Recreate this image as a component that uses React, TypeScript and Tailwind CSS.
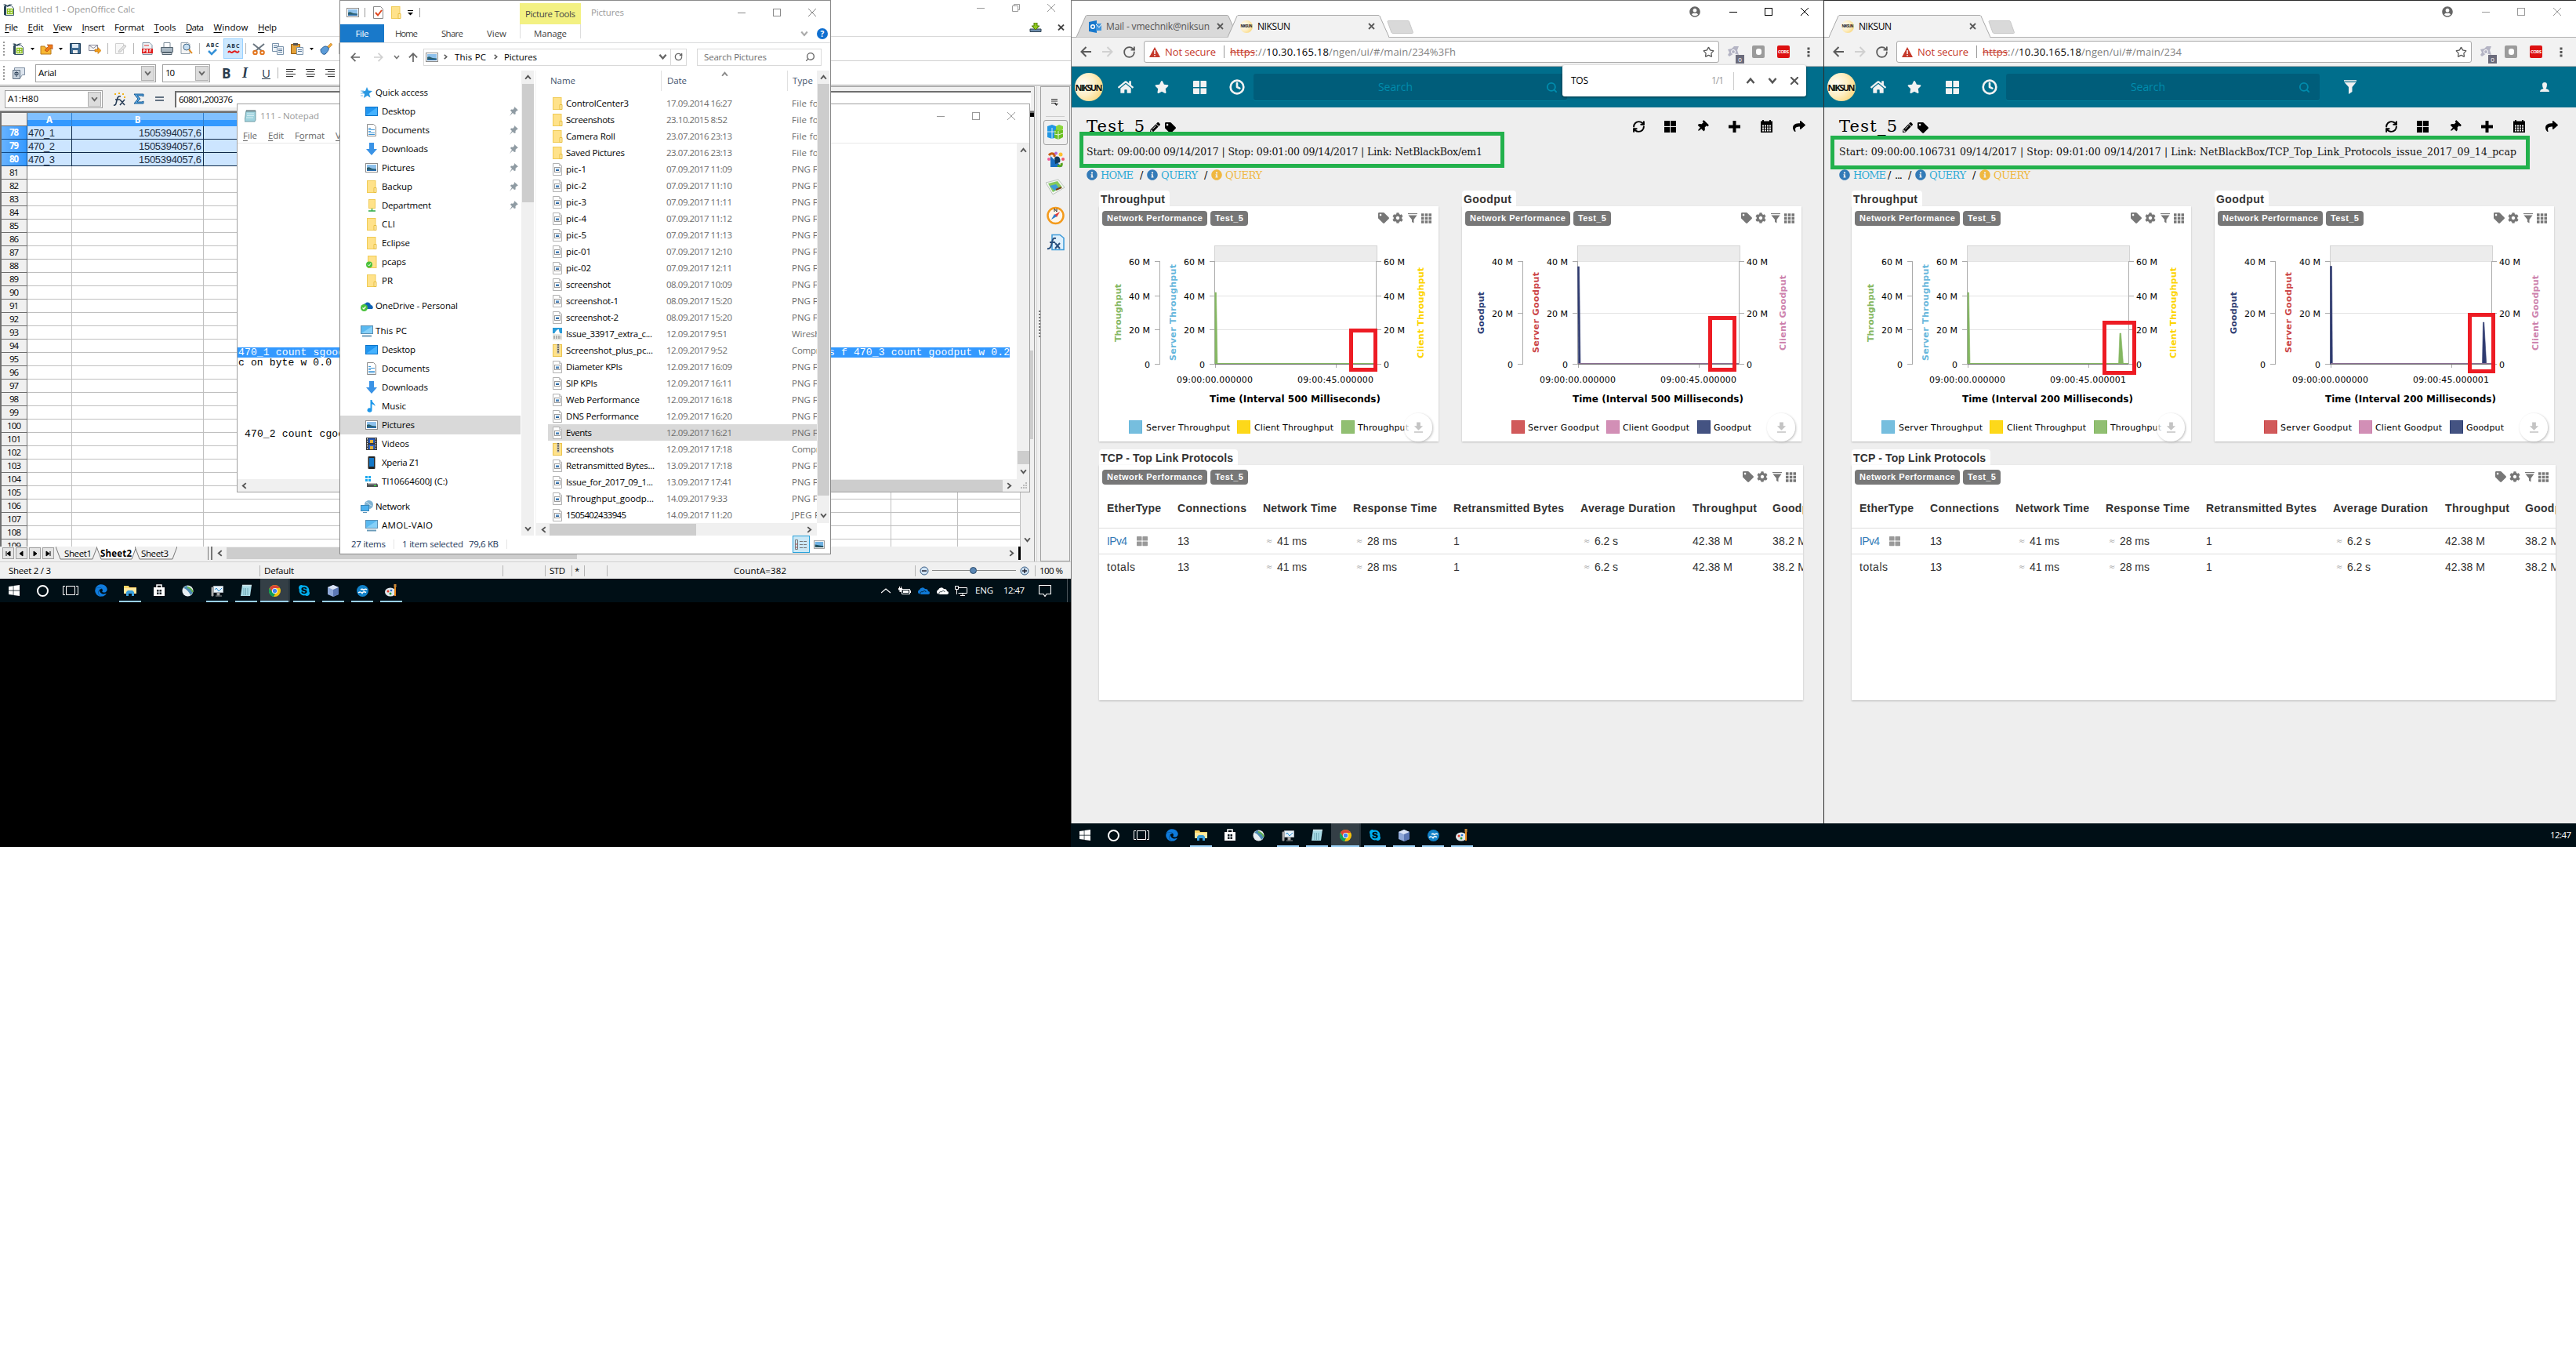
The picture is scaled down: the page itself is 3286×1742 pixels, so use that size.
import { useLayoutEffect, useRef, useState, type ReactNode } from "react";
import {
  FaHome, FaStar, FaThLarge, FaTag, FaCog, FaShare,
  FaThumbtack, FaPencilAlt, FaInfoCircle, FaWindows, FaSkype, FaEdge, FaUserCircle,
} from "react-icons/fa";
import { MdFileDownload } from "react-icons/md";
import { Clock, RefreshCw, Search, RotateCw, Star } from "lucide-react";

/* ---------- text that keeps a given width by adjusting its tracking ---------- */
function Fit({ w, className = "", u = -1, children }: { w: number; className?: string; u?: number; children: string }) {
  const ref = useRef<HTMLSpanElement>(null);
  const [ls, setLs] = useState(0);
  useLayoutEffect(() => {
    const el = ref.current;
    if (el && children.length > 1) {
      setLs((w - el.getBoundingClientRect().width) / (children.length - 1));
    }
  }, [w, children]);
  return (
    <span className={"inline-flex shrink-0 whitespace-pre " + className} style={{ width: w }}>
      <span ref={ref} style={{ letterSpacing: ls }}>
        {u < 0 ? children : <>{children.slice(0, u)}<span className="underline underline-offset-2">{children.charAt(u)}</span>{children.slice(u + 1)}</>}
      </span>
    </span>
  );
}

function Svg({ w, h, vb, className = "", children }: { w: number; h: number; vb?: string; className?: string; children: ReactNode }) {
  return (
    <svg width={w} height={h} viewBox={vb ?? `0 0 ${w} ${h}`} fill="none" className={"shrink-0 " + className}>
      {children}
    </svg>
  );
}

/* ---------- generic glyphs ---------- */
const Min = () => <Svg w={10} h={10}><path d="M0 5.5h10" stroke="currentColor" /></Svg>;
const Max = () => <Svg w={10} h={10}><rect x=".5" y=".5" width="9" height="9" stroke="currentColor" /></Svg>;
const Close = () => <Svg w={10} h={10}><path d="M0 0l10 10M10 0L0 10" stroke="currentColor" /></Svg>;
const Chev = ({ d, c = "#555", s = 8 }: { d: "u" | "d" | "l" | "r"; c?: string; s?: number }) => (
  <Svg w={s} h={s} vb="0 0 8 8">
    <path
      d={{ u: "M1 6l3-3.5L7 6", d: "M1 2l3 3.5L7 2", l: "M6 1L2.5 4 6 7", r: "M2 1l3.5 3L2 7" }[d]}
      stroke={c}
      strokeWidth="1.7"
    />
  </Svg>
);
const Arrow = ({ c, flip = false, s = 14 }: { c: string; flip?: boolean; s?: number }) => (
  <Svg w={s} h={s} vb="0 0 14 14" className={flip ? "rotate-180" : ""}>
    <path d="M14 7H1.5M7.5 1L1.5 7l6 6" stroke={c} strokeWidth="2" />
  </Svg>
);
const Caret = () => <Svg w={5} h={3}><path d="M0 0h5L2.5 3z" fill="#000" /></Svg>;

const Folder = () => (
  <Svg w={13} h={16}><rect x=".5" y=".5" width="10.5" height="15" fill="#ffe28a" stroke="#f0cb56" /><path d="M9 9.5h3v6H9z" fill="#ffe9a6" stroke="#e8bf42" /></Svg>
);
const Picture = () => (
  <Svg w={16} h={12}>
    <rect x=".5" y=".5" width="15" height="11" fill="#fff" stroke="#8b8b8b" />
    <rect x="2" y="2" width="12" height="8" fill="#8ec1ec" /><path d="M2 6c3-2 4 0 7 1l5 .5V10H2z" fill="#2d5f6b" /><path d="M2 8.5h12V10H2z" fill="#2b6fb0" />
  </Svg>
);
const Png = () => (
  <Svg w={13} h={16}>
    <path d="M.5.5h8l3 3v12H.5z" fill="#fff" stroke="#b0b0b0" /><path d="M8.500.5v3h3" stroke="#c4c4c4" />
    <rect x="2.500" y="5.500" width="7" height="6" stroke="#9a9a9a" /><path d="M4 7h4v3H4z" fill="#8fc0ea" /><path d="M4 8.500h4V10H4z" fill="#2a5f96" />
  </Svg>
);
const Zip = () => (
  <Svg w={13} h={16}><rect x=".5" y=".5" width="11" height="15" fill="#ffe28a" stroke="#e9c24f" /><path d="M5.500 0h3v12h-3z" fill="#b9b9b9" /><path d="M7 0v12" stroke="#555" strokeDasharray="1.500 1.500" strokeWidth="2" /></Svg>
);
const Shark = () => (
  <Svg w={13} h={16}><rect width="12" height="16" fill="#e9e9e4" /><path d="M0 0h12v7H0z" fill="#2a9bd8" /><path d="M2 8c2-5 4-6 6-6 0 3 1 4 2 6z" fill="#fff" /><path d="M1 11h10M1 13h10" stroke="#777" strokeDasharray="2 1" /></Svg>
);
const DesktopI = () => (
  <Svg w={16} h={12}><rect x=".5" y=".5" width="15" height="11" fill="#2196f0" stroke="#0b73c9" /><path d="M1 11L15 1v10z" fill="#45b2ff" /></Svg>
);
const DocI = () => (
  <Svg w={16} h={16}><path d="M2.500.5h8l3 3v12h-11z" fill="#fff" stroke="#8b8b8b" /><path d="M4 5.500h3M4 7.500h8M4 9.500h3M4 11.500h8M4 13.500h8" stroke="#3a93d6" /></Svg>
);
const DownI = () => <Svg w={16} h={16}><path d="M5 0h6v8h4l-7 8-7-8h4z" fill="#3a93e6" /></Svg>;
const MusicI = () => <Svg w={16} h={16}><path d="M6.500 0h2c0 4 4 4 4 8-1.500-2-3-2.500-4-2.500V13a3 2.700 0 1 1-2-2.500z" fill="#1c97ea" /></Svg>;
const VideoI = () => (
  <Svg w={16} h={16}><rect x="1" width="14" height="16" fill="#3b3b3b" /><path d="M4 1h8v6H4z" fill="#2458b8" /><path d="M4 9h8v6H4z" fill="#2f63c0" /><path d="M6 3h4v4H6zM6 11h4v4H6z" fill="#e3b13a" /><path d="M2.500 1v14M13.500 1v14" stroke="#fff" strokeDasharray="1.500 1.500" /></Svg>
);
const PhoneI = () => <Svg w={16} h={16}><rect x="3.500" y="0" width="9" height="16" rx="1" fill="#222" /><path d="M5 2h6v11H5z" fill="#1478c8" /></Svg>;
const DriveI = () => (
  <Svg w={16} h={15}><path d="M0 0h3v3H0zM4 0h3v3H4zM0 4h3v3H0zM4 4h3v3H4z" fill="#1ba8ee" /><path d="M2 9h12l2 2v3H2z" fill="#4f5357" /><path d="M3 9h11v1.500H3z" fill="#bbb" /><path d="M11 12h3v1h-3z" fill="#3f3" /></Svg>
);
const PcI = () => (
  <Svg w={16} h={15}><rect x=".5" y=".5" width="15" height="10" fill="#5ab9f0" stroke="#5a8fb3" /><path d="M1 10L15 1v9z" fill="#86d0f8" /><path d="M2 13.500h12" stroke="#6a9ab8" strokeWidth="2" /></Svg>
);
const NetI = () => (
  <Svg w={16} h={16}><circle cx="10.500" cy="5.500" r="5.500" fill="#7fb3d3" /><path d="M7 2c3 1 4 4 7 5" stroke="#cfe3ee" /><rect x=".5" y="6.500" width="10" height="7" fill="#4db1ee" stroke="#3a86b8" /><path d="M3 15.500h5" stroke="#5a93b8" /></Svg>
);
const OneI = () => (
  <Svg w={16} h={14}><path d="M3 10a4 4 0 0 1 3-6 4 4 0 0 1 7 2 3 3 0 0 1 2 5H3z" fill="#0f62b5" /><circle cx="4.500" cy="9.500" r="4.500" fill="#4ac13c" /><path d="M2.500 9.500l1.500 1.500 2.500-3" stroke="#fff" strokeWidth="1.200" /></Svg>
);
const QuickI = () => <Svg w={15} h={14}><path d="M8 0l2 4.500 5 .5-4 3.500 1.500 5L8.500 11 4 14l1-5-3.500-3.500L6 5z" fill="#2a98e2" /><path d="M0 5h4M0 8h4M0 11h3" stroke="#72b9ea" /></Svg>;
const NetFolder = () => <Svg w={13} h={16}><rect x="2.500" y=".5" width="8" height="11" fill="#ffe28a" stroke="#f0cb56" /><path d="M6.500 12v3M2 15h9" stroke="#2cab44" strokeWidth="1.500" /></Svg>;
const OkFolder = () => <Svg w={15} h={16}><rect x="2.500" y=".5" width="10.500" height="15" fill="#ffe28a" stroke="#f0cb56" /><circle cx="4" cy="11.500" r="4" fill="#4ac13c" /><path d="M2.200 11.500l1.500 1.500 2.300-3" stroke="#fff" /></Svg>;
const Pin = () => <Svg w={11} h={12}><path d="M6 0l5 4.500-1.500.5-2 2 .2 2.500L6 10 4 8l-4 4 3-5-2-2 1-1.500 2.500.2L6.200 1.500z" fill="#8f9ba3" /></Svg>;

/* ---------- OpenOffice Calc ---------- */
const Sep = () => <div className="h-[14px] w-px shrink-0 bg-[#b5b5b5]" />;
const Grip = () => <div className="h-[18px] w-0 shrink-0 border-l-2 border-dotted border-[#999]" />;
const CalcIcon = ({ s = 15 }: { s?: number }) => (
  <Svg w={s} h={s} vb="0 0 15 15"><path d="M2.500 2.500h8l3 3v9h-11z" fill="#fff" stroke="#3b556b" /><path d="M0 1c3-1 4 0 5 1 2-1 4-2 7-1-3 0-4 1-6 3C4 3 2 2 0 1zM1 3h3v11H1z" fill="#2b4658" /><path d="M5.500 6.500h6.500v6H5.500zM8.700 6.500v6M5.500 9.500h6.500" stroke="#8cc21c" strokeWidth="1.400" /></Svg>
);

function Combo({ w, btn, children }: { w: string; btn: string; children: ReactNode }) {
  return (
    <div className={"flex h-[23px] shrink-0 items-center border border-[#a0a0a0] bg-white pl-[3px] pr-px " + w}>
      {children}
      <div className={"ml-auto flex h-[19px] items-center justify-center border border-[#b0b0b0] bg-[#dcdcdc] " + btn}>
        <Chev d="d" s={9} c="#666" />
      </div>
    </div>
  );
}

const menuItems: [string, number, number][] = [["File", 17, 0], ["Edit", 20, 0], ["View", 24, 0], ["Insert", 29, 0], ["Format", 38, 1], ["Tools", 28, 0], ["Data", 23, 0], ["Window", 44, 0], ["Help", 24, 0]];
const rows = Array.from({ length: 32 }, (_, i) => 78 + i);

function CalcToolbars() {
  return (
    <>
      <div className="flex h-[31px] items-center border-b border-[#d0d0d0] pl-[4px]">
        <Grip />
        <div className="ml-[10px]"><CalcIcon /></div><div className="ml-[8px]"><Caret /></div>
        <Svg w={17} h={15} className="ml-[7px]"><path d="M1 4h5l1 2h7v8H1z" fill="#f7b733" stroke="#b9791a" /><path d="M6 9l5-5-2-2h7v6l-2-2-5 5z" fill="#ef7b1a" stroke="#a63c06" strokeWidth=".6" /></Svg>
        <div className="ml-[7px]"><Caret /></div>
        <Svg w={14} h={14} className="ml-[9px]"><path d="M.5.5h13v13H.5z" fill="#3d6a92" stroke="#1b3b58" /><path d="M3 1h8v5H3z" fill="#dce9f4" /><path d="M4 9h6v4H4z" fill="#eee" /></Svg>
        <Svg w={16} h={14} className="ml-[10px]"><path d="M.5 2.500h11v7H.5zM.5 2.500l5.500 4 5.500-4" fill="#f3f3f3" stroke="#889" /><path d="M8 8h4V5.500l4 4-4 4V11H8z" fill="#f3a01c" stroke="#b96a07" strokeWidth=".6" /></Svg>
        <div className="ml-[8px]"><Sep /></div>
        <Svg w={15} h={14} className="ml-[9px]"><path d="M.5.5h10v13H.5z" fill="#f7f7f7" stroke="#d0d0d0" /><path d="M5 9l7-7 2 2-7 7-3 .5z" fill="#e3e3e3" stroke="#c4c4c4" /></Svg>
        <div className="ml-[8px]"><Sep /></div>
        <Svg w={14} h={16} className="ml-[10px]"><path d="M1 .5h9l3 3v12H1z" fill="#eef2f5" stroke="#8295a5" /><path d="M0 8h14v6H0z" fill="#e01e1e" /><path d="M2 12.500V9.500h2v1.500H2M6 9.500v3h1.500v-3zM10 12.500v-3h2M10 11h1.500" stroke="#fff" /><path d="M3 4h6" stroke="#d33" /></Svg>
        <Svg w={16} h={16} className="ml-[10px]"><path d="M4 .5h8v6H4z" fill="#fff" stroke="#7c8c99" /><path d="M.5 6.500h15v6H.5z" fill="#a9b7c2" stroke="#54636f" /><path d="M2 13.500h12v2H2z" fill="#e6ecf0" stroke="#54636f" /></Svg>
        <Svg w={16} h={16} className="ml-[9px]"><path d="M1 .5h9l2 2v12H1z" fill="#f4f4f4" stroke="#93a1ad" /><circle cx="8" cy="6" r="4" fill="#c5def2" stroke="#446a8b" /><path d="M11 9l4 5" stroke="#e2891c" strokeWidth="2" /></Svg>
        <div className="ml-[8px]"><Sep /></div>
        <div className="ml-[7px] flex w-[18px] flex-col items-center"><Fit w={16} className="text-[7px] font-bold leading-[8px] text-[#223548]">ABC</Fit><Svg w={12} h={9}><path d="M1 3l4 4 6-6" stroke="#3692d8" strokeWidth="2.500" /></Svg></div>
        <div className="ml-[5px] flex h-[26px] w-[25px] flex-col items-center justify-center border border-[#99d1ff] bg-[#cce8ff]"><Fit w={16} className="text-[7px] font-bold leading-[8px] text-[#223548]">ABC</Fit><Svg w={16} h={6}><path d="M1 4c2-4 3 1 5 0s3-3 5-1 3 0 4-1" stroke="#e01e1e" strokeWidth="2" /></Svg></div>
        <div className="ml-[3px]"><Sep /></div>
        <Svg w={16} h={15} className="ml-[8px]"><path d="M1 1l11 9M15 1L4 10" stroke="#6b7680" strokeWidth="2" /><circle cx="3.500" cy="12" r="2.300" stroke="#e2741c" strokeWidth="2" /><circle cx="12.500" cy="12" r="2.300" stroke="#e2741c" strokeWidth="2" /></Svg>
        <Svg w={15} h={15} className="ml-[9px]"><path d="M.5.5h8v10h-8z" fill="#eef3f8" stroke="#7a93ab" /><path d="M6.500 4.500h8v10h-8z" fill="#eef3f8" stroke="#7a93ab" /><path d="M8 7.500h5M8 9.500h5M8 11.500h5M2 3.500h5M2 5.500h4" stroke="#5c7c9b" /></Svg>
        <Svg w={16} h={15} className="ml-[9px]"><path d="M.5 1.500h11v12H.5z" fill="#e4a23a" stroke="#9a5f11" /><path d="M3 0h6v3H3z" fill="#555" /><path d="M7.500 5.500h8v9h-8z" fill="#eef3f8" stroke="#7a93ab" /><path d="M9 8.500h5M9 10.500h5" stroke="#5c7c9b" /></Svg>
        <div className="ml-[8px]"><Caret /></div>
        <Svg w={16} h={15} className="ml-[8px]"><path d="M9 5l5-5 2 2-5 5z" fill="#f0a93c" stroke="#b66f10" strokeWidth=".5" /><path d="M1 8c4-4 6-5 9-3s0 6-3 9c-3 1-6-1-6-6z" fill="#5b9bd8" stroke="#2a5d93" /></Svg>
        <div className="ml-[8px]"><Sep /></div>
      </div>
      <div className="flex h-[31px] items-center border-b border-[#a0a0a0] pl-[4px] pr-px">
        <Grip />
        <Svg w={16} h={15} className="ml-[10px]"><path d="M2.500.5h13v9h-3l-3 4h-7z" fill="#dde5ee" stroke="#7f8fa2" /><path d="M.5 3.500h9v11h-9z" fill="#c7d2de" stroke="#5e6f82" /><path d="M3 6.500h4v3H3zM5 5v7" stroke="#33475c" /></Svg>
        <div className="ml-[13px] flex"><Combo w="w-[154px]" btn="w-[17px]"><Fit w={23}>Arial</Fit></Combo></div>
        <div className="ml-[8px] flex"><Combo w="w-[61px]" btn="w-[17px]"><Fit w={12}>10</Fit></Combo></div>
        <b className="ml-[15px] w-[12px] text-[17px] leading-none text-[#2b3c4e]">B</b>
        <i className="ml-[14px] w-[10px] font-['Liberation_Serif'] text-[18px] font-bold leading-none text-[#2b3c4e]">I</i>
        <span className="ml-[15px] w-[12px] text-[15px] leading-none text-[#2b3c4e] underline">U</span>
        <div className="ml-[8px]"><Sep /></div>
        {["M0 .5h12M0 3.500h9M0 6.500h12M0 9.500h9", "M0 .5h12M1.500 3.500h9M0 6.500h12M1.500 9.500h9", "M0 .5h12M3 3.500h9M0 6.500h12M3 9.500h9"].map((d, i) => (
          <Svg key={i} w={12} h={10} className={i ? "ml-[13px]" : "ml-[10px]"}><path d={d} stroke="#333" /></Svg>
        ))}
      </div>
    </>
  );
}

function Grid() {
  return (
    <div className="flex h-[555px] overflow-hidden border-l-2 border-t-2 border-[#6f6f6f] bg-white">
      <div className="w-[1300px] shrink-0">
        <div className="flex h-[17px] text-[11.500px] font-bold text-white">
          <div className="w-[33px] shrink-0 border-b border-r border-[#6f6f6f] bg-[#f0f0f0]" />
          {["w-[57px]", "w-[168px]", "w-[197px]", "grow"].map((w, i) => (
            <div key={w} className={"flex items-center justify-center border-r border-[#2f7fd0] bg-linear-to-b from-[#80c0ff] from-50% to-[#3399ff] to-50% leading-none " + w}>
              {"AB".charAt(i)}
            </div>
          ))}
        </div>
        {rows.map((n) => {
          const sel = n < 81;
          const cell = sel ? "border-b border-r border-[#0f2a4a] bg-[#cce5ff] text-[#1c2e42]" : "border-b border-r border-[#c0c0c0]";
          return (
            <div key={n} className="flex h-[17px] font-['Liberation_Sans'] text-[13px] leading-none">
              <div className={"flex w-[33px] shrink-0 items-center justify-center border-b border-r font-['Open_Sans'] text-[11.500px] " + (sel ? "border-[#0f4a8a] bg-linear-to-r from-[#66b2ff] to-[#3399ff] font-bold text-white" : "border-[#6f6f6f] bg-[#f0f0f0] text-black")}>
                <Fit w={n > 99 ? 18 : 12}>{String(n)}</Fit>
              </div>
              <div className={"flex w-[57px] items-center pl-px " + cell}>{sel && <Fit w={34}>{"470_" + (n - 77)}</Fit>}</div>
              <div className={"flex w-[168px] items-center justify-end pr-[2px] " + cell}>{sel && <Fit w={80}>1505394057,6</Fit>}</div>
              <div className={"w-[197px] " + cell} />
              {[0, 1, 2, 3, 4, 5, 6, 7, 8].map((k) => <div key={k} className={"w-[85px] " + cell} />)}
              <div className={"w-[80px] " + cell} />
            </div>
          );
        })}
      </div>
      <div className="flex grow flex-col items-center bg-[#f0f0f0]">
        <div className="h-[5px] w-[6px] self-end bg-black" />
        <div className="mt-[298px] h-[113px] w-[15px] bg-[#cdcdcd]" />
        <div className="mb-[4px] mt-auto"><Chev d="d" s={9} /></div>
      </div>
    </div>
  );
}

function SideBar() {
  return (
    <div className="ml-auto flex w-[38px] flex-col items-center border border-[#a0a0a0] bg-[#f0f0f0]">
      <Svg w={10} h={9} className="mt-[15px]"><path d="M0 .5h8M0 3h8M0 5.500h6" stroke="#333" /><path d="M4 6h5L6.500 9z" fill="#333" /></Svg>
      <div className="mt-[13px] h-px w-[24px] bg-[#ccc]" />
      <div className="mt-[4px] flex h-[32px] w-[31px] items-center justify-center rounded-[3px] border border-[#a0a0a0]">
        <Svg w={22} h={22}><path d="M1 3l6-2 5 2v14l-5 2-6-2z" fill="#2196e3" /><path d="M10 8l5-2 6 2v9l-6 3-5-2z" fill="#6cc024" /><path d="M12 3l4-2 5 2v4l-5 2-4-2z" fill="#8ad63a" /><path d="M1 10h11M7 5v14M15 9v11M10 13l5 1 6-2" stroke="#fff" strokeWidth=".8" /></Svg>
      </div>
      <Svg w={23} h={22} className="mt-[8px]"><path d="M5 20V6l15 14z" fill="#1a6fc2" /><path d="M10 8c4-4 9 0 7 6l-6 2z" fill="#123a5c" /><path d="M3 5c3-4 8-2 7 2" stroke="#c75b12" strokeWidth="3" /><path d="M14 18c4 2 6 0 5-3" stroke="#59a51e" strokeWidth="3" /><circle cx="3" cy="10" r="2" fill="#f05a9a" /><circle cx="18" cy="4" r="2.500" fill="#ffc02e" /><circle cx="12" cy="2.500" r="2" fill="#b567d8" /><circle cx="21" cy="10" r="2" fill="#f0566a" /></Svg>
      <Svg w={24} h={22} className="mt-[13px]"><path d="M0 5l16-4 8 10-15 9z" fill="#f4f6f4" stroke="#b9c2b9" /><path d="M3 6l12-3 6 8-12 6z" fill="#84c95c" /><path d="M5 9l8-2 4 5-6 3z" fill="#3f9ad6" /><path d="M13 14l7-3" stroke="#7a3c14" strokeWidth="2" /></Svg>
      <Svg w={23} h={24} className="mt-[13px]"><circle cx="11.500" cy="12" r="10" fill="#fdf6ea" stroke="#f39a1c" strokeWidth="2.500" /><path d="M17 7l-4 7-3-3z" fill="#e13a3a" /><path d="M6 17l4-7 3 3z" fill="#2d7fd0" /><path d="M10 7V3l3 4V3" stroke="#333" /></Svg>
      <Svg w={23} h={23} className="mt-[11px]"><path d="M7 1.500h10l5 4v15H7z" fill="#dff0fc" stroke="#3b99d8" strokeWidth="1.500" /><path d="M1 19c4 1 5-3 6-8s2-6 5-5M4 11h7M11 12l6 7M17 12l-6 7" stroke="#2a4f7c" strokeWidth="2" /></Svg>
    </div>
  );
}

function SheetTab({ label, w, tab, pad, active = false }: { label: string; w: number; tab: number; pad: string; active?: boolean }) {
  return (
    <div className={"relative flex h-[17px] shrink-0 items-center " + pad}>
      <Svg w={tab} h={17} className="absolute left-0 top-0"><path d={`M0 0L6 16H${tab - 6}L${tab} 0`} fill={active ? "#fff" : "#f0f0f0"} stroke="#777" /></Svg>
      <span className="relative flex leading-none"><Fit w={w} className={active ? "font-bold" : ""}>{label}</Fit></span>
    </div>
  );
}

function Calc() {
  return (
    <div className="absolute left-0 top-0 flex h-[738px] w-[1366px] flex-col overflow-hidden bg-white font-['Open_Sans'] text-[11.500px] leading-none text-black">
      <div className="flex h-[24px] items-center pl-[4px] pr-[20px] text-[#999]">
        <CalcIcon s={15} />
        <Fit w={148} className="ml-[5px]">Untitled 1 - OpenOffice Calc</Fit>
        <div className="ml-auto flex items-center gap-[35px] pb-[4px]"><Min /><Svg w={10} h={10}><path d="M.5 2.500h7v7h-7zM2.500 2.500v-2h7v7h-2" stroke="#999" /></Svg><Close /></div>
      </div>
      <div className="flex h-[23px] items-center gap-[12.500px] border-b border-[#d9d9d9] pl-[6px] pr-[8px]">
        {menuItems.map(([t, w, u]) => <Fit key={t} w={w} u={u}>{t}</Fit>)}
        <Svg w={16} h={12} className="ml-auto"><path d="M1 8h14v3.500H1z" fill="#6f8fae" stroke="#345" /><path d="M6 0h4v4h3L8 9 3 4h3z" fill="#8fc71c" stroke="#4f7a0a" /></Svg>
        <Svg w={9} h={8} className="ml-[8px]"><path d="M1 .5l7 7M8 .5l-7 7" stroke="#444" strokeWidth="1.800" /></Svg>
      </div>
      <CalcToolbars />
      <div className="flex h-[607px] bg-[#f0f0f0] pr-px pt-px">
        <div className="flex w-[1320px] flex-col border-r border-[#a0a0a0]">
          <div className="flex h-[32px] items-center border-b border-t border-[#a0a0a0] pl-[6px] pr-[4px]">
            <Combo w="w-[125px]" btn="w-[17px]"><Fit w={39}>A1:H80</Fit></Combo>
            <Svg w={17} h={17} className="ml-[13px]"><path d="M1 16c3 1 3-2 4-6s2-6 5-5M3 9h6M9 9l6 7M15 9l-6 7" stroke="#2a3f58" strokeWidth="1.600" /><path d="M2 2h2M7 1h2M12 2h2M14 6h2" stroke="#f0b41c" strokeWidth="2" /></Svg>
            <Svg w={14} h={14} className="ml-[9px]"><path d="M1 1h12v3l-2-1H5l4 4-4 4h6l2-1v3H1l5-6z" fill="#58a6e0" stroke="#175a94" /></Svg>
            <Svg w={11} h={6} className="ml-[14px]"><path d="M0 1h11M0 5h11" stroke="#33475c" strokeWidth="1.600" /></Svg>
            <div className="ml-[14px] flex h-[21px] grow items-center border-l-2 border-t-2 border-[#6f6f6f] bg-white pl-[3px]"><Fit w={69}>60801,200376</Fit></div>
          </div>
          <Grid />
          <div className="flex h-[17px] items-center">
            {["M2 1v6M7 1L3 4l4 3z", "M6 1L2 4l4 3z", "M3 1l4 3-4 3z", "M7 1v6M2 1l4 3-4 3z"].map((d, i) => (
              <div key={i} className={"flex h-[15px] w-[15px] items-center justify-center border border-[#a0a0a0] bg-[#e4e4e4] " + (i ? "ml-[2px]" : "ml-[3px]")}><Svg w={9} h={8}><path d={d} fill="#000" stroke="#000" /></Svg></div>
            ))}
            <div className="w-[2px]" />
            <SheetTab label="Sheet1" w={35} tab={53} pad="w-[52px] pl-[11px]" />
            <SheetTab label="Sheet2" w={40} tab={51} pad="w-[49px] pl-[5px]" active />
            <SheetTab label="Sheet3" w={35} tab={54} pad="w-[54px] pl-[8px]" />
            <div className="ml-auto flex h-full w-[1054px] items-center border-l border-[#777]">
              <div className="h-full w-[5px] border-r-2 border-[#777]" />
              <div className="ml-[5px]"><Chev d="l" s={9} /></div>
              <div className="ml-[4px] h-[15px] w-[447px] bg-[#cdcdcd]" />
              <div className="ml-auto"><Chev d="r" s={9} /></div>
              <div className="ml-[4px] mr-[17px] h-[17px] w-[3px] bg-black" />
            </div>
          </div>
        </div>
        <div className="ml-[2px] flex w-[5px] flex-col justify-center border-l border-[#d8d8d8] pl-[2px]"><div className="h-[34px] border-l-2 border-dotted border-[#777]" /></div>
        <SideBar />
      </div>
      <div className="flex h-[22px] items-center border-t border-[#d0d0d0] bg-[#f0f0f0] pl-[11px]">
        <Fit w={54}>Sheet 2 / 3</Fit>
        <div className="ml-[266px] flex items-center"><Sep /><Fit w={38} className="ml-[5px]">Default</Fit></div>
        <div className="ml-[266px] flex items-center"><Sep /></div>
        <div className="ml-[53px] flex items-center"><Sep /><Fit w={20} className="ml-[5px]">STD</Fit></div>
        <div className="ml-[8px] flex items-center"><Sep /><span className="ml-[3px] w-[6px]">*</span></div>
        <div className="ml-[6px] flex items-center"><Sep /></div>
        <div className="ml-[28px] flex items-center"><Sep /></div>
        <div className="ml-auto flex items-center pr-[10px]">
          <Fit w={67}>CountA=382</Fit>
          <div className="ml-[164px] flex items-center"><Sep /></div>
          <Svg w={12} h={12} className="ml-[5px]"><circle cx="6" cy="6" r="5" fill="#cfe2f3" stroke="#3b5f86" /><path d="M3 6h6" stroke="#223" strokeWidth="1.500" /></Svg>
          <div className="ml-[4px] flex h-[10px] w-[107px] items-center"><div className="h-px w-[48px] bg-[#888]" /><div className="h-[9px] w-[9px] rounded-full border border-[#2a4a6a] bg-[#5a86b4]" /><div className="h-px grow bg-[#888]" /></div>
          <Svg w={12} h={12} className="ml-[5px]"><circle cx="6" cy="6" r="5" fill="#cfe2f3" stroke="#3b5f86" /><path d="M3 6h6M6 3v6" stroke="#223" strokeWidth="1.500" /></Svg>
          <div className="ml-[7px] flex items-center"><Sep /></div>
          <Fit w={30} className="ml-[5px]">100 %</Fit>
        </div>
      </div>
    </div>
  );
}

/* ---------- Notepad ---------- */
function Notepad() {
  return (
    <div className="absolute left-[302px] top-[132px] flex h-[496px] w-[1012px] flex-col border border-[#a0a0a0] bg-white font-['Open_Sans'] text-[11.500px] leading-none">
      <div className="flex h-[30px] items-center pl-[9px] pr-[18px] text-[#999]">
        <Svg w={15} h={16}><path d="M2 1h12v12l-1 2H0z" fill="#9fd3de" stroke="#5b8b96" strokeWidth=".8" /><path d="M2.500 1.500h11" stroke="#555" strokeDasharray="1 1" strokeWidth="2" /><path d="M3 5h9M3 7.500h9M2 10h9" stroke="#d6eef3" /></Svg>
        <Fit w={75} className="ml-[5px]">111 - Notepad</Fit>
        <div className="ml-auto flex gap-[35px]"><Min /><Max /><Close /></div>
      </div>
      <div className="flex h-[20px] items-center gap-[14px] border-b border-[#e8e8e8] pl-[7px] text-[#666]">
        <Fit w={18} u={0}>File</Fit><Fit w={20} u={0}>Edit</Fit><Fit w={38} u={1}>Format</Fit><Fit w={24} u={0}>View</Fit>
      </div>
      <div className="flex h-[428px]">
        <div className="w-[994px] pt-[260px] font-['Liberation_Mono'] text-[13px] leading-[13px] text-black">
          <div className="flex w-[985px] justify-between bg-[#3399ff] pl-px text-white"><Fit w={159}>470_1 count sgoodput</Fit><Fit w={231}>s f 470_3 count goodput w 0.2</Fit></div>
          <div className="flex pl-px"><Fit w={119}>c on byte w 0.0</Fit></div>
          <div className="mt-[78px] flex pl-[9px]"><Fit w={151}>470_2 count cgoodpu</Fit></div>
        </div>
        <div className="flex grow flex-col items-center bg-[#f0f0f0]"><div className="mt-[4px]"><Chev d="u" s={9} /></div><div className="mt-auto h-[17px] w-[15px] bg-[#cdcdcd]" /><div className="my-[5px]"><Chev d="d" s={9} /></div></div>
      </div>
      <div className="flex h-[16px] items-center bg-[#f0f0f0] pl-[4px]">
        <Chev d="l" s={9} /><div className="ml-[160px] h-[15px] w-[803px] bg-[#cdcdcd]" /><div className="ml-[4px]"><Chev d="r" s={9} /></div>
        <Svg w={9} h={9} className="ml-auto mr-[2px]"><path d="M6 1h2M3 4h2M6 4h2M0 7h2M3 7h2M6 7h2" stroke="#bbb" strokeWidth="2" /></Svg>
      </div>
    </div>
  );
}

/* ---------- Explorer ---------- */
type Nav = { t: string; w: number; i: ReactNode; top?: boolean; pin?: boolean; sel?: boolean };
const nav: Nav[] = [
  { t: "Quick access", w: 67, i: <QuickI />, top: true },
  { t: "Desktop", w: 43, i: <DesktopI />, pin: true },
  { t: "Documents", w: 61, i: <DocI />, pin: true },
  { t: "Downloads", w: 59, i: <DownI />, pin: true },
  { t: "Pictures", w: 42, i: <Picture />, pin: true },
  { t: "Backup", w: 39, i: <Folder />, pin: true },
  { t: "Department", w: 63, i: <NetFolder />, pin: true },
  { t: "CLI", w: 17, i: <Folder /> },
  { t: "Eclipse", w: 36, i: <Folder /> },
  { t: "pcaps", w: 31, i: <OkFolder /> },
  { t: "PR", w: 14, i: <Folder /> },
  { t: "OneDrive - Personal", w: 105, i: <OneI />, top: true },
  { t: "This PC", w: 40, i: <PcI />, top: true },
  { t: "Desktop", w: 43, i: <DesktopI /> },
  { t: "Documents", w: 61, i: <DocI /> },
  { t: "Downloads", w: 59, i: <DownI /> },
  { t: "Music", w: 31, i: <MusicI /> },
  { t: "Pictures", w: 42, i: <Picture />, sel: true },
  { t: "Videos", w: 35, i: <VideoI /> },
  { t: "Xperia Z1", w: 48, i: <PhoneI /> },
  { t: "TI10664600J (C:)", w: 84, i: <DriveI /> },
  { t: "Network", w: 44, i: <NetI />, top: true },
  { t: "AMOL-VAIO", w: 65, i: <PcI /> },
];
type FileRow = [string, number, string, string, ReactNode];
const P = "PNG File";
const files: FileRow[] = [
  ["ControlCenter3", 80, "17.09.2014 16:27", "File folder", <Folder />],
  ["Screenshots", 62, "23.10.2015 8:52", "File folder", <Folder />],
  ["Camera Roll", 63, "23.07.2016 23:13", "File folder", <Folder />],
  ["Saved Pictures", 75, "23.07.2016 23:13", "File folder", <Folder />],
  ["pic-1", 26, "07.09.2017 11:09", P, <Png />],
  ["pic-2", 26, "07.09.2017 11:10", P, <Png />],
  ["pic-3", 26, "07.09.2017 11:11", P, <Png />],
  ["pic-4", 26, "07.09.2017 11:12", P, <Png />],
  ["pic-5", 26, "07.09.2017 11:13", P, <Png />],
  ["pic-01", 32, "07.09.2017 12:10", P, <Png />],
  ["pic-02", 32, "07.09.2017 12:11", P, <Png />],
  ["screenshot", 57, "08.09.2017 10:09", P, <Png />],
  ["screenshot-1", 67, "08.09.2017 15:20", P, <Png />],
  ["screenshot-2", 67, "08.09.2017 15:20", P, <Png />],
  ["Issue_33917_extra_c...", 110, "12.09.2017 9:51", "Wireshark", <Shark />],
  ["Screenshot_plus_pc...", 111, "12.09.2017 9:52", "Compressed", <Zip />],
  ["Diameter KPIs", 72, "12.09.2017 16:09", P, <Png />],
  ["SIP KPIs", 40, "12.09.2017 16:11", P, <Png />],
  ["Web Performance", 94, "12.09.2017 16:18", P, <Png />],
  ["DNS Performance", 93, "12.09.2017 16:20", P, <Png />],
  ["Events", 33, "12.09.2017 16:21", P, <Png />],
  ["screenshots", 61, "12.09.2017 17:18", "Compressed", <Zip />],
  ["Retransmitted Bytes...", 113, "13.09.2017 17:18", P, <Png />],
  ["Issue_for_2017_09_1...", 111, "13.09.2017 17:41", P, <Png />],
  ["Throughput_goodp...", 112, "14.09.2017 9:33", P, <Png />],
  ["1505402433945", 77, "14.09.2017 11:20", "JPEG File", <Png />],
];
const typeW: Record<string, number> = { "File folder": 56, "PNG File": 45, Wireshark: 53, Compressed: 65, "JPEG File": 48 };

function Explorer() {
  return (
    <div className="absolute left-[433px] top-0 flex h-[707px] w-[627px] flex-col border border-[#8a8a8a] bg-white font-['Open_Sans'] text-[11.500px] leading-none text-black">
      <div className="flex h-[30px] items-center pl-[8px] pr-[18px]">
        <Picture /><div className="ml-[7px] h-[12px] w-px bg-[#999]" />
        <Svg w={13} h={16} className="ml-[10px]"><path d="M.5.5h9l3 3v12H.5z" fill="#fff" stroke="#888" /><path d="M3 8l3 3.500L11 5" stroke="#e0451c" strokeWidth="2" /></Svg>
        <div className="ml-[10px]"><Folder /></div>
        <Svg w={7} h={7} className="ml-[8px]"><path d="M0 .5h7" stroke="#000" /><path d="M0 3h7L3.500 6.500z" fill="#000" /></Svg>
        <div className="ml-[8px] h-[12px] w-px bg-[#999]" />
        <div className="ml-[127px] flex h-[27px] w-[78px] items-center justify-center self-end bg-[#f3f182] text-[#444]"><Fit w={64}>Picture Tools</Fit></div>
        <Fit w={42} className="ml-[13px] text-[#999]">Pictures</Fit>
        <div className="ml-auto flex gap-[35px] text-[#888]"><Min /><Max /><Close /></div>
      </div>
      <div className="flex h-[24px] border-b border-[#dadbdc] text-[#444]">
        <div className="flex h-[23px] w-[56px] items-center justify-center bg-[#1979ca] text-white"><Fit w={17}>File</Fit></div>
        <div className="flex h-[23px] grow items-center pl-[14px] pr-[3px]">
          <Fit w={29}>Home</Fit><Fit w={28} className="ml-[30px]">Share</Fit><Fit w={25} className="ml-[30px]">View</Fit>
          <div className="ml-[17px] flex h-[18px] w-[78px] items-center justify-center self-start border-x border-[#ddd] pt-[5px]"><Fit w={42}>Manage</Fit></div>
          <div className="ml-auto"><Chev d="d" s={10} c="#aaa" /></div>
          <div className="ml-[11px] flex h-[14px] w-[14px] items-center justify-center rounded-full bg-[#0f6fd0] text-[10px] font-bold text-white">?</div>
        </div>
      </div>
      <div className="flex h-[35px] items-center pl-[13px] pr-[11px]">
        <Arrow c="#666" s={12} /><div className="ml-[18px]"><Arrow c="#d0d0d0" flip s={12} /></div>
        <div className="ml-[13px]"><Chev d="d" s={8} c="#777" /></div>
        <div className="ml-[11px] rotate-90"><Arrow c="#666" s={12} /></div>
        <div className="ml-[7px] flex h-[22px] w-[336px] items-center border border-[#d9d9d9] pl-[2px]">
          <Picture /><div className="ml-[6px]"><Chev d="r" s={7} /></div><Fit w={40} className="ml-[8px]">This PC</Fit><div className="ml-[9px]"><Chev d="r" s={7} /></div><Fit w={42} className="ml-[7px]">Pictures</Fit>
          <div className="ml-auto"><Chev d="d" s={11} c="#666" /></div>
          <div className="ml-[4px] flex h-full w-[20px] items-center justify-center border-l border-[#d9d9d9]"><RotateCw size={11} strokeWidth={3} color="#666" /></div>
        </div>
        <div className="ml-auto flex h-[22px] w-[159px] items-center border border-[#d9d9d9] pl-[8px] pr-[7px] text-[#6d6d6d]"><Fit w={80}>Search Pictures</Fit><Search size={13} strokeWidth={2.500} className="ml-auto -scale-x-100" color="#666" /></div>
      </div>
      <div className="flex h-[593px]">
        <div className="w-[230px] pt-[16px]">
          {nav.map((n, i) => (
            <div key={i} className={"flex h-[24px] items-center pr-[3px] " + (n.top ? "pl-[25px] " : "pl-[31px] ") + (n.top && i ? "mt-[8px] " : "") + (n.sel ? "bg-[#d9d9d9]" : "")}>
              <div className={"flex shrink-0 justify-center " + (n.top ? "w-[17px]" : "w-[18px]")}>{n.i}</div>
              <Fit w={n.w} className={n.top ? "ml-[3px]" : "ml-[4px]"}>{n.t}</Fit>
              {n.pin && <div className="ml-auto"><Pin /></div>}
            </div>
          ))}
        </div>
        <div className="ml-px flex w-[16px] flex-col items-center bg-[#f0f0f0]"><div className="mt-[4px]"><Chev d="u" s={9} /></div><div className="mt-[4px] h-[151px] w-[15px] bg-[#cdcdcd]" /><div className="mb-[4px] mt-auto"><Chev d="d" s={9} /></div></div>
        <div className="ml-[2px] w-px bg-[#f3f3f3]" />
        <div className="flex w-[374px] flex-col">
          <div className="flex h-[577px]">
            <div className="w-[358px] overflow-hidden">
              <div className="flex h-[26px] items-center pl-[18px] text-[#43546e]">
                <Fit w={32}>Name</Fit><div className="ml-[109px] h-full w-px bg-[#e0e0e0]" /><Fit w={25} className="ml-[7px]">Date</Fit>
                <div className="ml-[44px] self-start"><Chev d="u" s={9} c="#888" /></div>
                <div className="ml-[75px] h-full w-px bg-[#e0e0e0]" /><Fit w={26} className="ml-[6px]">Type</Fit>
              </div>
              <div className="pt-[5px]">
                {files.map(([t, w, d, k, icon]) => (
                  <div key={t} className="flex h-[21px] items-center pl-[15px]">
                    <div className={"flex h-full w-[343px] items-center overflow-hidden pl-[6px] " + (t === "Events" ? "bg-[#d9d9d9]" : "")}>
                      <div className="flex w-[15px]">{icon}</div>
                      <div className="ml-[4px] flex w-[128px] shrink-0"><Fit w={w}>{t}</Fit></div>
                      <div className="flex w-[160px] shrink-0 text-[#6d6d6d]"><Fit w={d.length > 15 ? 84 : 78}>{d}</Fit></div>
                      <Fit w={typeW[k]} className="text-[#6d6d6d]">{k}</Fit>
                    </div>
                  </div>
                ))}
              </div>
            </div>
            <div className="flex w-[16px] flex-col items-center bg-[#f0f0f0]"><div className="mt-[4px]"><Chev d="u" s={9} /></div><div className="mt-[4px] h-[525px] w-[15px] bg-[#cdcdcd]" /><div className="mb-[5px] mt-auto"><Chev d="d" s={9} /></div></div>
          </div>
          <div className="flex h-[16px] w-[358px] items-center bg-[#f0f0f0] px-[5px]"><Chev d="l" s={9} /><div className="ml-[3px] h-[15px] w-[187px] bg-[#cdcdcd]" /><div className="ml-auto"><Chev d="r" s={9} /></div></div>
        </div>
      </div>
      <div className="flex h-[22px] items-center pl-[14px] pr-[7px] text-[#1e395b]">
        <Fit w={44}>27 items</Fit><div className="ml-[10px] h-[12px] w-px bg-[#e5e5e5]" /><Fit w={78} className="ml-[10px]">1 item selected</Fit><Fit w={38} className="ml-[7px]">79,6 KB</Fit><div className="ml-[10px] h-[12px] w-px bg-[#e5e5e5]" />
        <div className="ml-auto flex h-[22px] w-[22px] items-center justify-center border border-[#26a0da] bg-[#cbe8f6]"><Svg w={16} h={13}><path d="M.5.5h3v12h-3zM6 2.500h4M11 2.500h4M6 6.500h4M11 6.500h4M6 10.500h4M11 10.500h4" stroke="#777" /><path d="M1 6h2M1 10h2" stroke="#c33" /></Svg></div>
        <Svg w={14} h={11} vb="0 0 16 12" className="ml-[5px]"><rect x=".5" y=".5" width="15" height="11" fill="#fff" stroke="#8b8b8b" /><path d="M2 2h12v8H2z" fill="#6fb1e2" /><path d="M2 6l6 1 6 1v2H2z" fill="#22505f" /></Svg>
      </div>
    </div>
  );
}

/* ---------- taskbar ---------- */
const taskIcons: { i: ReactNode; on?: boolean; hot?: boolean }[] = [
  { i: <Svg w={16} h={14}><path d="M0 1h6l1 2h9v8H0z" fill="#ffd667" /><path d="M0 4h16v7H0z" fill="#ffe9a0" /><path d="M3 14V9l2-2h6l2 2v5h-3v-3H6v3z" fill="#3aa0de" /></Svg>, on: true },
  { i: <Svg w={14} h={16}><path d="M0 4h14v11H0z" fill="#fff" /><path d="M4 4V1h6v3" stroke="#fff" strokeWidth="1.500" /><path d="M4 7h2.500v2.500H4zM7.500 7H10v2.500H7.500zM4 10.500h2.500V13H4zM7.500 10.500H10V13H7.500z" fill="#00101a" /></Svg> },
  { i: <Svg w={15} h={15}><circle cx="7.500" cy="7.500" r="7" fill="#e8eef2" /><path d="M2 4c4 1 7 5 9 9l3-3C12 5 8 1 5 1z" fill="#4d8bb0" /><path d="M7 3c3 0 6 3 7 6" stroke="#62b34c" strokeWidth="2" /></Svg> },
  { i: <Svg w={16} h={15}><path d="M3.500 1.500h12v8h-12z" fill="#e8f3fa" stroke="#aab4bb" /><path d="M5 6l2-2 3 4 4-4" stroke="#2a8cd0" /><path d="M1 3v11h2V3zM8 10h3v3H8zM6 14h8" fill="#bbb" stroke="#999" /></Svg>, on: true },
  { i: <Svg w={14} h={16}><path d="M2 1h12l-2 14H0z" fill="#a9dbe6" /><path d="M2.500 1.500h11" stroke="#eee" strokeDasharray="1 1" strokeWidth="2" /><path d="M4 5v9M6.500 5v9M9 5v9" stroke="#6fa9b6" /></Svg>, on: true },
  { i: <Svg w={15} h={15}><circle cx="7.500" cy="7.500" r="7.500" fill="#f4c20d" /><path d="M1 3.800A7.500 7.500 0 0 1 14 4H7.500L4.500 9z" fill="#db4437" /><path d="M1 3.800L4.500 9.500 8 11l-2 4A7.500 7.500 0 0 1 1 3.800z" fill="#0f9d58" /><circle cx="7.500" cy="7.500" r="3.500" fill="#fff" /><circle cx="7.500" cy="7.500" r="2.700" fill="#4285f4" /></Svg>, on: true, hot: true },
  { i: <FaSkype size={16} color="#00aff0" />, on: true },
  { i: <Svg w={14} h={15}><path d="M0 3l7-3 7 3v9l-7 3-7-3z" fill="#8fa8d8" /><path d="M0 3l7 3 7-3-7-3z" fill="#dbe5f7" /><path d="M7 6v9l7-3V3z" fill="#5c78b5" /></Svg>, on: true },
  { i: <Svg w={15} h={15}><circle cx="7.500" cy="7.500" r="7.500" fill="#1181c8" /><path d="M5 6c2-1.500 3-.5 4 .5C10 5 12 5 13 6M2 10c2-1.500 4-1 5 .5C8 8.500 10 8.500 12 9.500" stroke="#fff" strokeWidth="1.500" /></Svg>, on: true },
  { i: <Svg w={16} h={16}><ellipse cx="7" cy="10" rx="7" ry="5.500" fill="#dfe7ec" /><circle cx="4" cy="9" r="1.500" fill="#e03a2a" /><circle cx="7" cy="12" r="1.500" fill="#2c9c3e" /><circle cx="8" cy="8" r="1.300" fill="#2b6fd0" /><path d="M13 2v13" stroke="#e98a1c" strokeWidth="2" /><path d="M11.500 0h3v4h-3z" fill="#c9893a" /></Svg>, on: true },
];

function Taskbar({ pos, tray }: { pos: string; tray: ReactNode }) {
  return (
    <div className={"absolute flex h-[30px] items-center bg-[#000f16] text-white " + pos}>
      <div className="flex w-[36px] justify-center"><FaWindows size={16} /></div>
      <div className="flex w-[36px] justify-center"><div className="h-[15px] w-[15px] rounded-full border-2 border-white" /></div>
      <div className="flex w-[36px] justify-center"><Svg w={20} h={14}><path d="M4.500 1.500h11v11h-11zM3 1.500H.5v11H3M17 1.500h2.500v11H17" stroke="#fff" /></Svg></div>
      <div className="ml-[2px] flex w-[37px] justify-center"><FaEdge size={16} color="#0f7bdc" /></div>
      {taskIcons.map((t, k) => (
        <div key={k} className={"flex h-full w-[37.100px] flex-col items-center " + (t.hot ? "border-r-2 border-[#25323a] bg-[#343f46]" : "")}>
          <div className="flex grow items-center">{t.i}</div>
          <div className={"-mt-[2px] h-[2px] " + (t.hot ? "w-full " : "w-[28px] ") + (t.on ? "bg-[#9ad0f5]" : "")} />
        </div>
      ))}
      <div className="ml-auto flex items-center font-['Open_Sans'] text-[11.500px] leading-none">{tray}</div>
    </div>
  );
}

function Cloud({ c }: { c: string }) {
  return <Svg w={16} h={11}><path d="M2 9a3 3 0 0 1 1-5 4 4 0 0 1 7-1 3.500 3.500 0 0 1 4 3 2 2 0 0 1 0 4H4z" fill={c} /><path d="M4 10c-1-3 2-4 3-3 1-2 4-2 4 0" stroke="#000f16" strokeWidth=".8" /></Svg>;
}

function Tray() {
  return (
    <>
      <Svg w={12} h={7}><path d="M0 6l6-5 6 5" stroke="#fff" strokeWidth="1.300" /></Svg>
      <Svg w={16} h={11} className="ml-[10px]"><path d="M4.500 3.500h10v6h-10zM15.500 5v3" stroke="#fff" /><path d="M6 5h7v3H6z" fill="#fff" /><path d="M0 2h5v2.500H3.500V7h-2V4.500H0zM1 0h1v2H1zM3 0h1v2H3z" fill="#fff" /></Svg>
      <div className="ml-[8px] flex gap-[8px]"><Cloud c="#0f78d4" /><Cloud c="#fff" /></div>
      <Svg w={16} h={13} className="ml-[8px]"><path d="M4.500 2.500h11v7h-11M7 12.500h6M10 9.500v3M.5.500h4v4h-4zM2.500 5v6" stroke="#fff" /></Svg>
      <Fit w={23} className="ml-[10px]">ENG</Fit>
      <Fit w={27} className="ml-[13px]">12:47</Fit>
      <Svg w={16} h={15} className="ml-[18px]"><path d="M.5.500h15v11H10l-2 3-2-3H.5z" stroke="#fff" strokeWidth="1.200" /></Svg>
      <div className="ml-[20px] mr-[4px] h-[30px] w-px bg-[#4a555b]" />
    </>
  );
}

/* ---------- Chrome + dashboard ---------- */
function Tab({ children, active = false, cls = "" }: { children: ReactNode; active?: boolean; cls?: string }) {
  return (
    <div className={"relative flex h-[29px] w-[206px] shrink-0 items-center pl-[16px] pr-[18px] " + cls}>
      <Svg w={206} h={29} className="absolute left-0 top-0">
        <path d="M0 28.500L12 1.500q.5-1 2-1h178q1.500 0 2 1l12 27" fill={active ? "#f2f2f2" : "#d9d9d9"} stroke="#a8a8a8" />
        {active && <path d="M1 28.500h204" stroke="#f2f2f2" />}
      </Svg>
      <div className="relative flex w-full items-center">{children}<Svg w={9} h={9} className="ml-auto"><path d="M1 1l7 7M8 1L1 8" stroke="#5a5a5a" strokeWidth="1.800" /></Svg></div>
    </div>
  );
}
function Niksun({ small = false }: { small?: boolean }) {
  return (
    <div className={"flex shrink-0 items-center justify-center rounded-full bg-[radial-gradient(circle_at_30%_40%,#fffdf8_0%,#fdeec4_45%,#f8cb58_100%)] font-['Open_Sans'] font-bold leading-none text-[#111] " + (small ? "h-[16px] w-[16px] text-[4.500px]" : "h-[36px] w-[36px] text-[11px]")}>
      <Fit w={small ? 15 : 35}>NIKSUN</Fit>
    </div>
  );
}

type Series = { name: string; c: string; fill: string; x: number; tx: number; w: number };
type ChartSpec = {
  ys: [string, number][]; interval: string; end: string; series: Series[];
  axis: [string, string, number, number, number][];
  line: string; base: string; spikes: string[]; hi: [number, number, number, number];
};

function Chart({ s }: { s: ChartSpec }) {
  const lbl = { fontSize: 11, fill: "#000" };
  return (
    <svg width="433" height="276" viewBox="36 287 433 276" className="block overflow-visible font-['DejaVu_Sans']">
      <rect x="183.500" y="313.500" width="207" height="20" fill="#ececec" stroke="#d4d4d4" />
      {s.ys.map(([t, y]) => (
        <g key={t}>
          <path d={`M184 ${y}H389`} stroke="#e3e3e3" />
          <path d={`M177 ${y}h7M389 ${y}h7M107 ${y}h7`} stroke="#aaa" />
          <text x="101" y={y + 4.500} textAnchor="end" {...lbl}>{t}</text>
          <text x="171" y={y + 4.500} textAnchor="end" {...lbl}>{t}</text>
          <text x="399" y={y + 4.500} {...lbl}>{t}</text>
        </g>
      ))}
      <path d="M183.500 333V464M389.500 333V464M113.500 333V464.500M184.500 464v5M338.500 464v5" stroke="#aaa" />
      {s.spikes.map((d, i) => <path key={i} d={d} fill={s.line} stroke={s.line} strokeWidth=".6" />)}
      <path d="M184 463.500H389" stroke={s.base} strokeWidth="1" />
      <path d="M184 464.500H389" stroke="#777" />
      {s.axis.map(([t, c, x, y0, y1]) => (
        <text key={t} x="0" y="0" transform={`translate(${x + 4.500} ${y1}) rotate(-90)`} fontSize="11" fontWeight="bold" fill={c} textLength={y1 - y0}>{t}</text>
      ))}
      <text x="135" y="488" textLength="97" {...lbl}>09:00:00.000000</text>
      <text x="289" y="488" textLength="97" {...lbl}>{s.end}</text>
      <text x="177" y="513" textLength="218" fontSize="12" fontWeight="bold" fill="#000">{`Time (Interval ${s.interval} Milliseconds)`}</text>
      {s.series.map((q) => (
        <g key={q.name}>
          <rect x={q.x + 0.5} y="536.500" width="16" height="16" fill={q.fill} stroke={q.c} />
          <text x={q.tx} y="549" textLength={q.w} {...lbl}>{q.name}</text>
        </g>
      ))}
      <rect x={s.hi[0] + 2.5} y={s.hi[1] + 2.5} width={s.hi[2] - 5} height={s.hi[3] - 5} stroke="#ed1c24" strokeWidth="5" fill="none" />
    </svg>
  );
}

function Badge({ w, children }: { w: number; children: string }) {
  return <div className="flex h-[19px] items-center rounded-[4px] bg-[#777] px-[6px] font-['Liberation_Sans'] text-[11px] font-bold leading-none text-white"><Fit w={w}>{children}</Fit></div>;
}
function WidgetHead() {
  return (
    <div className="flex h-[25px] items-end pl-[4px] pr-[9px]">
      <Badge w={122}>Network Performance</Badge><div className="w-[4px]" /><Badge w={36}>Test_5</Badge>
      <div className="ml-auto flex h-[20px] items-center text-[#777]">
        <FaTag size={14} /><FaCog size={14} className="ml-[4px]" />
        <Svg w={12} h={13} className="ml-[6px]"><path d="M0 .5h12" stroke="#777" strokeWidth="1.200" /><path d="M.5 2.500h11L7.500 8v4.500L5 11V8z" fill="#777" /></Svg>
        <Svg w={13} h={13} className="ml-[5px]"><path d="M0 2h3.500M4.800 2h3.500M9.500 2h3.500M0 6.500h3.500M4.800 6.500h3.500M9.500 6.500h3.500M0 11h3.500M4.800 11h3.500M9.500 11h3.500" stroke="#777" strokeWidth="3.300" /></Svg>
      </div>
    </div>
  );
}
function Widget({ title, tw, tab, s }: { title: string; tw: number; tab: string; s: ChartSpec }) {
  return (
    <div className="w-[433px]">
      <div className={"flex h-[20px] items-center rounded-t-[4px] bg-white pl-[2px] pt-[2px] font-['Liberation_Sans'] text-[14px] font-bold leading-none text-[#333] " + tab}><Fit w={tw}>{title}</Fit></div>
      <div className="relative h-[300px] bg-white shadow-[0_1px_2px_#bbb]">
        <WidgetHead />
        <div className="-mt-px"><Chart s={s} /></div>
        <div className="absolute bottom-0 right-[8px] flex h-[36px] w-[36px] items-center justify-center rounded-full bg-white/70 shadow-[1px_1px_3px_#bbb]"><MdFileDownload size={19} color="#c4c4c4" /></div>
      </div>
    </div>
  );
}

const tp = (b: boolean): ChartSpec => ({
  ys: [["60 M", 333.5], ["40 M", 377.5], ["20 M", 420.5], ["0", 464.5]],
  interval: b ? "200" : "500", end: b ? "09:00:45.000001" : "09:00:45.000000",
  series: [
    { name: "Server Throughput", c: "#67b7dc", fill: "#76bede", x: 74, tx: 96, w: 107 },
    { name: "Client Throughput", c: "#fdd400", fill: "#fdd81a", x: 212, tx: 234, w: 101 },
    { name: "Throughput", c: "#84b761", fill: "#91bf72", x: 345, tx: 366, w: 65 },
  ],
  axis: [["Throughput", "#84b761", 59, 362, 436], ["Server Throughput", "#67b7dc", 129, 337, 460], ["Client Throughput", "#fdd400", 445, 341, 457]],
  line: "#84b761", base: "#84b761",
  spikes: b ? ["M184 373h1.500l1.500 91h-3z", "M376.500 464l1.500-39h1.500l3 39z"] : ["M183.800 373h1.700l1.500 91h-3z"],
  hi: b ? [356, 409, 43, 69] : [355, 419, 36, 55],
});
const gp = (b: boolean): ChartSpec => ({
  ys: [["40 M", 333.5], ["20 M", 399.5], ["0", 464.5]],
  interval: b ? "200" : "500", end: b ? "09:00:45.000001" : "09:00:45.000000",
  series: [
    { name: "Server Goodput", c: "#cc4748", fill: "#d15a5b", x: 99, tx: 120, w: 91 },
    { name: "Client Goodput", c: "#cd82ad", fill: "#d28fb6", x: 220, tx: 241, w: 85 },
    { name: "Goodput", c: "#2f4074", fill: "#445382", x: 336, tx: 357, w: 48 },
  ],
  axis: [["Goodput", "#2f4074", 59, 372, 426], ["Server Goodput", "#cc4748", 129, 347, 450], ["Client Goodput", "#cd82ad", 444, 351, 447]],
  line: "#2f3b70", base: "#8a6f92",
  spikes: b ? ["M183.500 339.500h2l.8 125h-2.800z", "M377.500 464l1-53h1.200l3 53z"] : ["M183.500 340h2l1.500 124h-2.500z"],
  hi: b ? [359, 399, 35, 77] : [350, 403, 36, 71],
});

const cols = "grid grid-cols-[100px_109px_115px_128px_162px_143px_102px_80px]";
const heads: [string, number][] = [["EtherType", 69], ["Connections", 88], ["Network Time", 94], ["Response Time", 107], ["Retransmitted Bytes", 141], ["Average Duration", 121], ["Throughput", 82], ["Goodput", 60]];
function Approx({ w, children }: { w: number; children: string }) {
  return <div className="flex items-center"><span className="w-[18px] pl-[4px] font-['DejaVu_Sans'] text-[10px] text-[#aaa]">≈</span><Fit w={w}>{children}</Fit></div>;
}
function DataRow({ first }: { first: ReactNode }) {
  return (
    <div className={"h-[33px] items-center border-t border-[#ddd] " + cols}>
      <div className="flex items-center pl-[10px]">{first}</div>
      <Fit w={15}>13</Fit><Approx w={38}>41 ms</Approx><Approx w={38}>28 ms</Approx><span>1</span><Approx w={30}>6.2 s</Approx><Fit w={51}>42.38 M</Fit><Fit w={44}>38.2 M</Fit>
    </div>
  );
}

function Info({ c }: { c: string }) {
  return <FaInfoCircle size={14} color={c} className="shrink-0" />;
}

function Chrome({ second = false }: { second?: boolean }) {
  const niksun = <><Niksun small /><Fit w={42} className="ml-[6px]">NIKSUN</Fit></>;
  return (
    <div className={"absolute top-0 flex h-[1050px] w-[960px] flex-col border-l border-t bg-white font-['Open_Sans'] text-[12px] leading-none text-black " + (second ? "left-[2326px] border-[#2b2b2b]" : "left-[1366px] border-[#7a7a7a]")}>
      <div className="flex h-[47px] items-end pl-[6px] shadow-[inset_0_-1px_0_#b0b0b0]">
        {second ? <Tab active>{niksun}</Tab> : (
          <>
            <Tab>
              <Svg w={16} h={16}><path d="M0 2l10-2v16L0 14z" fill="#1778cc" /><path d="M9 4h7v9H9z" fill="#3f95dc" /><path d="M9 5l4 4 3-4" stroke="#fff" /><circle cx="5" cy="8" r="2.300" stroke="#fff" strokeWidth="1.500" /></Svg>
              <Fit w={132} className="ml-[6px] text-[#555]">Mail - vmechnik@niksun</Fit>
            </Tab>
            <Tab active cls="-ml-[13px] z-10">{niksun}</Tab>
          </>
        )}
        <Svg w={34} h={17} className="-ml-[3px] mb-[5px]"><path d="M1 1.500q0-1 1-1h25q1 0 1.500 1l5 14q0 1-1 1H8q-1.500 0-2-1z" fill="#d9d9d9" stroke="#c8c8c8" /></Svg>
        <div className={"ml-auto flex h-[28px] items-center self-start pr-[19px] " + (second ? "text-[#999]" : "text-black")}>
          <FaUserCircle size={14} color="#666" /><div className="ml-[37px]"><Min /></div><div className="ml-[35px]"><Max /></div><div className="ml-[36px]"><Close /></div>
        </div>
      </div>
      <div className="flex h-[37px] items-center border-b border-[#b5b5b5] bg-[#f2f2f2] pl-[11px]">
        <Arrow c="#5a5a5a" /><div className="ml-[14px]"><Arrow c="#d0d0d0" flip /></div>
        <RotateCw size={17} strokeWidth={2.500} color="#5a5a5a" className="ml-[12px]" />
        <div className="ml-[10px] flex h-[28px] w-[734px] items-center rounded-[3px] border border-[#a9a9a9] bg-white pl-[6px] pr-[5px] text-[13px]">
          <Svg w={14} h={13}><path d="M7 0l7 13H0z" fill="#c5392b" /><path d="M7 4v5M7 10v1.500" stroke="#fff" strokeWidth="1.500" /></Svg>
          <Fit w={65} className="ml-[6px] text-[#c5392b]">Not secure</Fit>
          <div className="ml-[10px] h-[16px] w-px bg-[#999]" />
          <span className="ml-[7px] flex text-[#c5392b] line-through"><Fit w={32}>https</Fit></span>
          <Fit w={14} className="text-[#808080]">://</Fit><Fit w={80}>10.30.165.18</Fit>
          {second ? <Fit w={128} className="text-[#808080]">/ngen/ui/#/main/234</Fit> : <Fit w={162} className="text-[#808080]">/ngen/ui/#/main/234%3Fh</Fit>}
          <Star size={15} color="#555" className="ml-auto" />
        </div>
        <div className="relative ml-[10px] h-[16px] w-[16px]">
          <Svg w={16} h={16}><path d="M1 5l5-1 3-3 6 0-2 5 2 6-6-2-6 4-2-2 2-3z" fill="#b4b4c4" /><circle cx="8" cy="8" r="2.500" stroke="#fff" /></Svg>
          <div className="absolute left-[11px] top-[12px] flex h-[11px] w-[11px] items-center justify-center bg-[#6b6b7b] text-[8px] text-white">0</div>
        </div>
        <div className="ml-[16px] flex h-[16px] w-[16px] items-center justify-center rounded-[2px] bg-[#9b9b9b]"><div className="h-[8px] w-[7px] rounded-[3px] bg-white" /></div>
        <div className="ml-[16px] flex h-[16px] w-[16px] items-center justify-center rounded-[2px] bg-[#dd1111] text-[6px] font-bold text-white"><Fit w={14}>CORS</Fit></div>
        <Svg w={4} h={13} className="ml-[22px]"><path d="M.5.500h3v3h-3zM.5 5h3v3h-3zM.5 9.500h3v3h-3z" fill="#555" /></Svg>
      </div>
      <div className="relative flex h-[52px] items-center bg-[#006e8c] pl-[4px] text-[#f2f2f2]">
        <Niksun />
        <FaHome size={20} className="ml-[19px]" /><FaStar size={18} className="ml-[27px]" /><Svg w={17} h={17} className="ml-[31px]"><path d="M0 1q0-1 1-1h7v8H0zM9.500 0H16q1 0 1 1v7H9.500zM0 9.500h8V17H1q-1 0-1-1zM9.500 9.500H17V16q0 1-1 1H9.500z" fill="#f2f2f2" /></Svg><Clock size={20} strokeWidth={3.200} className="ml-[29px]" />
        <div className="ml-[11px] flex h-[34px] w-[400px] items-center rounded-[3px] bg-[#005d7a] pl-[159px] pr-[12px] text-[14px] text-[#008cad] shadow-[0_1px_0_#007d99]"><Fit w={44}>Search</Fit><Search size={15} strokeWidth={3} className="ml-auto" /></div>
        {second ? (
          <>
            <Svg w={16} h={18} className="ml-[31px]"><path d="M0 1h16" stroke="#f2f2f2" strokeWidth="1.600" /><path d="M.5 3h15l-5 6v6L6 18V9z" fill="#f2f2f2" /></Svg>
            <Svg w={12} h={13} className="ml-[234px]"><path d="M3 3q0-3 3-3t3 3-1.500 5q4.500 1 4.500 4H0q0-3 4.500-4Q3 6 3 3z" fill="#f2f2f2" /></Svg>
          </>
        ) : (
          <div className="absolute -top-[2px] left-[626px] flex h-[40px] w-[311px] items-center rounded-[3px] bg-white pl-[11px] pr-[10px] text-black shadow-[0_1px_3px_#00000088]">
            <Fit w={22}>TOS</Fit><Fit w={16} className="ml-auto text-[#999]">1/1</Fit><div className="ml-[12px] h-[23px] w-px bg-[#ccc]" />
            <div className="ml-[15px]"><Chev d="u" s={12} /></div><div className="ml-[16px]"><Chev d="d" s={12} /></div><Svg w={10} h={10} className="ml-[17px]"><path d="M0 0l10 10M10 0L0 10" stroke="#555" strokeWidth="2" /></Svg>
          </div>
        )}
      </div>
      <div className="relative flex h-[913px] flex-col bg-[#eeeeee] pl-[19px]">
        <div className="flex h-[48px] items-center pr-[23px]">
          <Fit w={74} className="font-['DejaVu_Serif'] text-[21px]">Test_5</Fit>
          <FaPencilAlt size={13} className="ml-[7px] mt-[3px]" /><FaTag size={14} className="ml-[6px] mt-[3px]" />
          <RefreshCw size={17} strokeWidth={2.800} className="ml-auto" /><Svg w={15} h={15} className="ml-[24px]"><path d="M0 0h7v7H0zM8 0h7v7H8zM0 8h7v7H0zM8 8h7v7H8z" fill="#000" /></Svg>
          <FaThumbtack size={15} className="ml-[26px] rotate-45" /><Svg w={15} h={15} className="ml-[26px]"><path d="M7.500 0v15M0 7.500h15" stroke="#000" strokeWidth="4" /></Svg>
          <Svg w={15} h={16} className="ml-[26px]"><path d="M0 1.500h15V16H0z" fill="#000" /><path d="M3 0v2M12 0v2" stroke="#000" strokeWidth="2" /><path d="M2 7.500h11M2 10.500h11M2 13.500h11" stroke="#eee" strokeWidth="1.800" strokeDasharray="2 1" /></Svg>
          <FaShare size={16} className="ml-[26px]" />
        </div>
        <div className="flex h-[16px] items-center pt-[2px] font-['DejaVu_Serif'] text-[12.500px] text-[#111]">
          {second ? <Fit w={864}>Start: 09:00:00.106731 09/14/2017 | Stop: 09:01:00 09/14/2017 | Link: NetBlackBox/TCP_Top_Link_Protocols_issue_2017_09_14_pcap</Fit> : <Fit w={505}>Start: 09:00:00 09/14/2017 | Stop: 09:01:00 09/14/2017 | Link: NetBlackBox/em1</Fit>}
        </div>
        <div className="flex h-[42px] items-center pt-[2px] font-['DejaVu_Serif'] text-[13px] text-[#2fabd6]">
          <Info c="#337ab7" /><Fit w={42} className="ml-[4px]">HOME</Fit>
          {second ? <><span className="ml-[2px] w-[9px] text-black">/</span><Fit w={10} className="text-black">...</Fit><span className="ml-[7px] w-[9px] text-black">/</span></> : <span className="ml-[8px] w-[9px] text-black">/</span>}
          <Info c="#337ab7" /><Fit w={47} className="ml-[4px]">QUERY</Fit><span className="ml-[8px] w-[9px] text-black">/</span><Info c="#f0b840" /><Fit w={47} className="ml-[4px] text-[#f0b840]">QUERY</Fit>
        </div>
        <div className="flex gap-[30px] pl-[16px]">
          <Widget title="Throughput" tw={82} tab="w-[90px]" s={tp(second)} />
          <Widget title="Goodput" tw={61} tab="w-[69px]" s={gp(second)} />
        </div>
        <div className="ml-[16px] mt-[10px] w-[898px] font-['Liberation_Sans'] text-[14px] text-[#333]">
          <div className="flex h-[20px] w-[177px] items-center rounded-t-[4px] bg-white pl-[2px] pt-[2px] font-bold"><Fit w={169}>TCP - Top Link Protocols</Fit></div>
          <div className="h-[300px] overflow-hidden bg-white shadow-[0_1px_2px_#bbb]">
            <WidgetHead />
            <div className={"h-[55px] items-center pt-[4px] font-bold " + cols}>
              {heads.map(([t, w], i) => <div key={t} className={"flex " + (i ? "" : "pl-[10px]")}><Fit w={w}>{t}</Fit></div>)}
            </div>
            <DataRow first={<><Fit w={26} className="text-[#337ab7]">IPv4</Fit><FaThLarge size={14} color="#999" className="ml-[12px]" /></>} />
            <DataRow first={<Fit w={36}>totals</Fit>} />
          </div>
        </div>
        <div className={"absolute border-[5px] border-[#22b14c] " + (second ? "left-[8px] top-[36px] h-[43px] w-[892px]" : "left-[10px] top-[31px] h-[46px] w-[542px]")} />
      </div>
    </div>
  );
}

export default function App() {
  return (
    <div className="h-[1742px] w-[3286px] overflow-hidden bg-white">
      <div className="relative h-[1080px] w-full bg-black">
        <Calc />
        <Notepad />
        <Explorer />
        <Taskbar pos="left-0 top-[738px] w-[1366px]" tray={<Tray />} />
        <Chrome />
        <Chrome second />
        <Taskbar pos="left-[1366px] top-[1050px] w-[1920px]" tray={<Fit w={27} className="mr-[6px]">12:47</Fit>} />
      </div>
    </div>
  );
}
